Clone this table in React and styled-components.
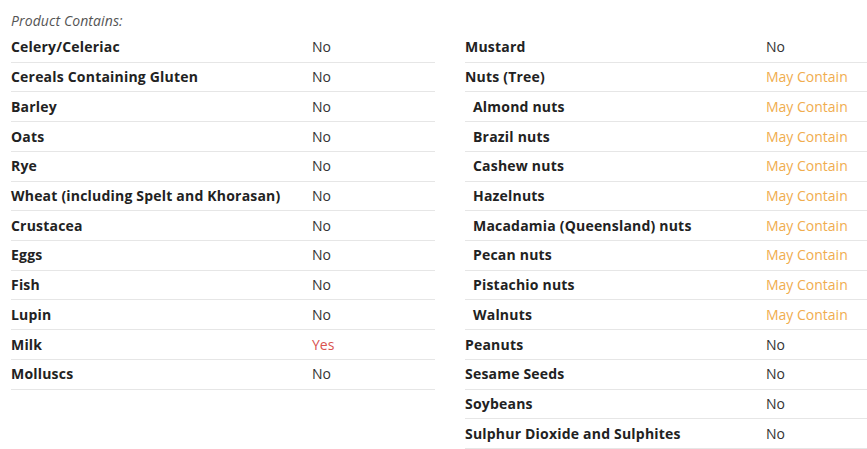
import React from 'react';
import styled, { createGlobalStyle } from 'styled-components';

const GlobalStyle = createGlobalStyle`
  html, body {
    margin: 0;
    padding: 0;
    background: #fff;
  }
  body {
    font-family: 'Open Sans', 'Liberation Sans', sans-serif;
    font-size: 14px;
    color: #333;
  }
`;

const Wrapper = styled.div`
  padding: 11px 0 0 11px;
`;

const Heading = styled.div`
  font-style: italic;
  font-size: 14px;
  line-height: 20px;
  letter-spacing: 0.1px;
  color: #555;
  margin-bottom: 2px;
`;

const Columns = styled.div`
  display: grid;
  grid-template-columns: 424px 1fr;
  column-gap: 30px;
  align-items: start;
`;

const List = styled.div`
  display: flex;
  flex-direction: column;
`;

const Row = styled.div`
  display: grid;
  grid-template-columns: 301px 1fr;
  line-height: 20px;
  padding: 4.36px 0;
  border-bottom: 1px solid #e6e6e6;
`;

const Label = styled.div`
  font-weight: 700;
  color: #222;
  letter-spacing: 0.2px;
  padding-left: ${p => (p.$sub ? '8px' : '0')};
`;

const colours = {
  No: '#333',
  Yes: '#d9534f',
  'May Contain': '#f0ad4e',
};

const Value = styled.div`
  color: ${p => colours[p.$v] || '#333'};
`;

const left = [
  ['Celery/Celeriac', 'No'],
  ['Cereals Containing Gluten', 'No'],
  ['Barley', 'No'],
  ['Oats', 'No'],
  ['Rye', 'No'],
  ['Wheat (including Spelt and Khorasan)', 'No'],
  ['Crustacea', 'No'],
  ['Eggs', 'No'],
  ['Fish', 'No'],
  ['Lupin', 'No'],
  ['Milk', 'Yes'],
  ['Molluscs', 'No'],
];

const right = [
  ['Mustard', 'No'],
  ['Nuts (Tree)', 'May Contain'],
  ['Almond nuts', 'May Contain', true],
  ['Brazil nuts', 'May Contain', true],
  ['Cashew nuts', 'May Contain', true],
  ['Hazelnuts', 'May Contain', true],
  ['Macadamia (Queensland) nuts', 'May Contain', true],
  ['Pecan nuts', 'May Contain', true],
  ['Pistachio nuts', 'May Contain', true],
  ['Walnuts', 'May Contain', true],
  ['Peanuts', 'No'],
  ['Sesame Seeds', 'No'],
  ['Soybeans', 'No'],
  ['Sulphur Dioxide and Sulphites', 'No'],
];

const AllergenList = ({ items }) => (
  <List>
    {items.map(([name, value, sub]) => (
      <Row key={name}>
        <Label $sub={sub}>{name}</Label>
        <Value $v={value}>{value}</Value>
      </Row>
    ))}
  </List>
);

const App = () => (
  <>
    <GlobalStyle />
    <Wrapper>
      <Heading>Product Contains:</Heading>
      <Columns>
        <AllergenList items={left} />
        <AllergenList items={right} />
      </Columns>
    </Wrapper>
  </>
);

export default App;
